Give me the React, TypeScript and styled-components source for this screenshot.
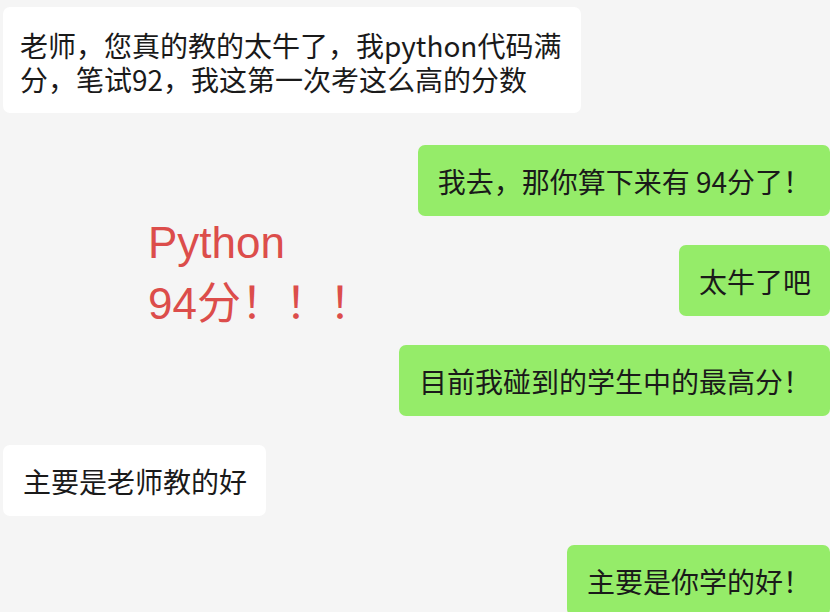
import React from 'react'
import styled, { createGlobalStyle } from 'styled-components'

const GlobalStyle = createGlobalStyle`
  html, body {
    margin: 0;
    padding: 0;
    background: #f5f5f5;
    overflow: hidden;
  }
`

const Chat = styled.div`
  position: relative;
  width: 830px;
  height: 612px;
  box-sizing: border-box;
  padding-top: 7px;
  display: flex;
  flex-direction: column;
  gap: 29px;
  background: #f5f5f5;
  font-family: "Noto Sans CJK SC", "Noto Sans", sans-serif;
  overflow: hidden;
`

const Row = styled.div<{ $mine?: boolean; $multi?: boolean }>`
  display: flex;
  justify-content: ${p => (p.$mine ? 'flex-end' : 'flex-start')};
  padding-left: ${p => (p.$mine ? '0' : '3px')};
  margin-bottom: ${p => (p.$multi ? '3px' : '0')};
`

const Bubble = styled.div<{ $mine?: boolean; $multi?: boolean }>`
  background: ${p => (p.$mine ? '#95ec69' : '#ffffff')};
  color: #1a1a1a;
  font-size: 28px;
  line-height: ${p => (p.$multi ? '34px' : '37px')};
  padding: ${p => (p.$multi ? '21px 20px 17px 17px' : '18px 19px 16px 20px')};
  border-radius: 7px;
  white-space: pre;
`

const Note = styled.div`
  position: absolute;
  left: 148px;
  top: 212px;
  color: #dc4d4b;
  font-family: "Liberation Sans", "Noto Sans CJK SC", sans-serif;
  font-size: 44px;
  line-height: 61px;
  white-space: pre;
`

const messages: { text: string; mine?: boolean }[] = [
  { text: '老师，您真的教的太牛了，我python代码满\n分，笔试92，我这第一次考这么高的分数' },
  { text: '我去，那你算下来有 94分了！', mine: true },
  { text: '太牛了吧', mine: true },
  { text: '目前我碰到的学生中的最高分！', mine: true },
  { text: '主要是老师教的好' },
  { text: '主要是你学的好！', mine: true },
]

export default function App() {
  return (
    <>
      <GlobalStyle />
      <Chat>
        {messages.map((m, i) => {
          const multi = m.text.includes('\n')
          return (
            <Row key={i} $mine={m.mine} $multi={multi}>
              <Bubble $mine={m.mine} $multi={multi}>
                {m.text}
              </Bubble>
            </Row>
          )
        })}
        <Note>{'Python\n94分！！！'}</Note>
      </Chat>
    </>
  )
}
